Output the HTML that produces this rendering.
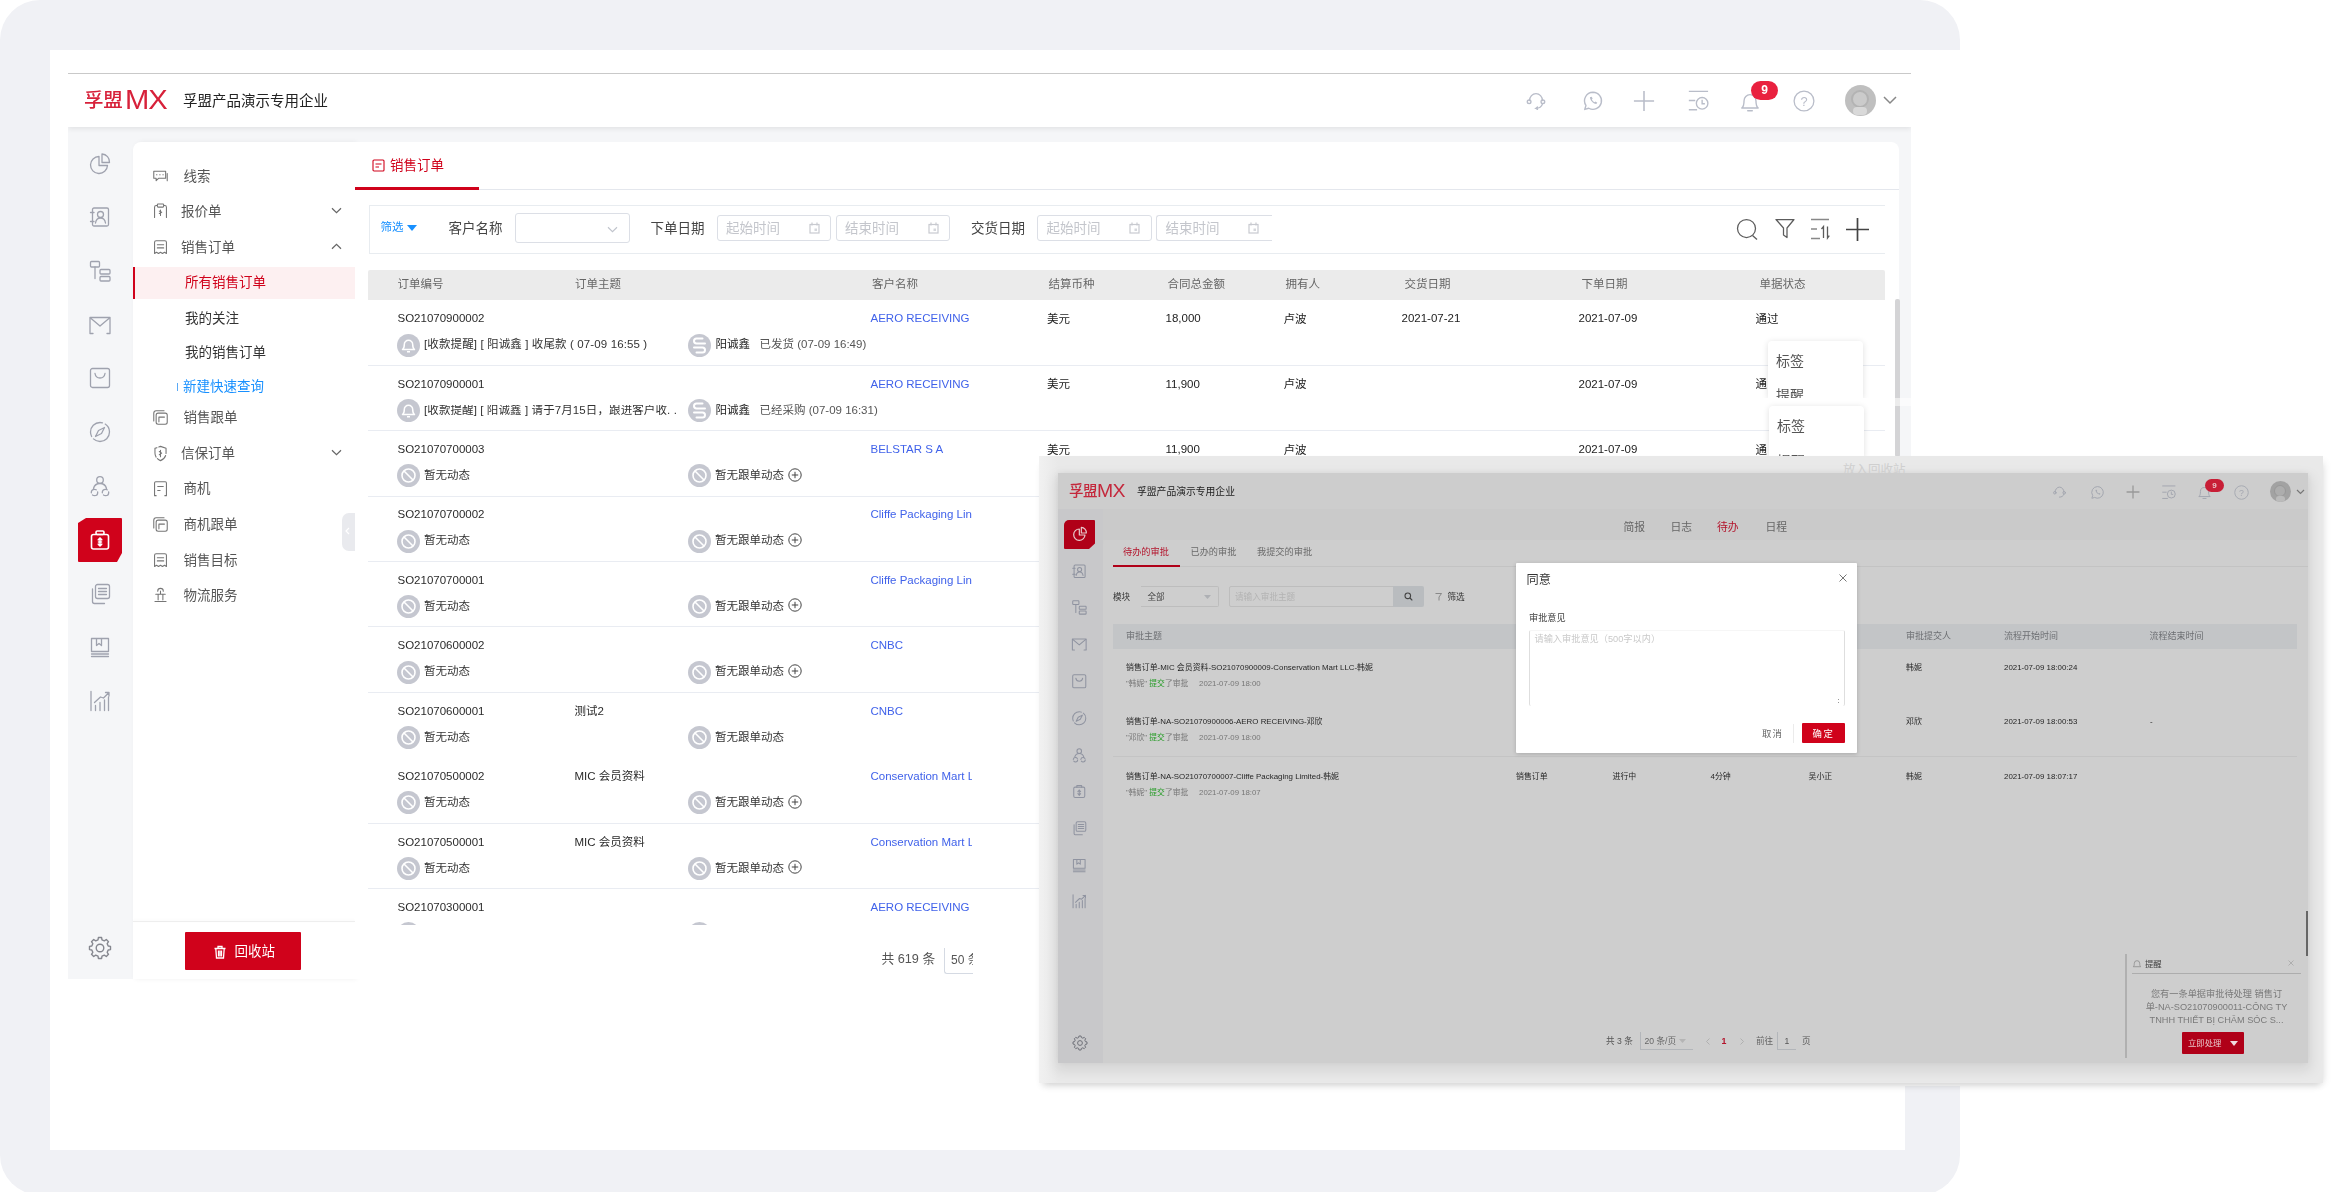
<!DOCTYPE html>
<html lang="zh-CN"><head><meta charset="utf-8"><title>孚盟MX 销售订单</title>
<style>
html,body{margin:0;padding:0}
body{width:2336px;height:1192px;position:relative;overflow:hidden;background:#fff;font-family:"Liberation Sans","Noto Sans CJK SC",sans-serif;}
.b{position:absolute;box-sizing:border-box}
.t{position:absolute;white-space:nowrap;line-height:1}
svg{overflow:visible}
.soft{filter:blur(.6px)}
.soft2{filter:blur(.7px)}
</style></head><body>
<div class="b" style="left:0;top:0;width:1960px;height:1195px;background:#f0f1f5;border-radius:40px"></div>
<div class="b" style="left:50px;top:50px;width:1855px;height:1100px;background:#fff"></div>
<div class="b" style="left:1905px;top:50px;width:431px;height:1036px;background:#fff"></div>
<div class="b soft" id="app1" style="left:0;top:0;width:2336px;height:1192px">
<div class="b" style="left:68.0px;top:127.0px;width:1843.0px;height:852.0px;background:#f5f6f8"></div>
<div class="b" style="left:68.0px;top:73.0px;width:1843.0px;height:54.0px;background:#fff;border-top:1.5px solid #c9c9c9;box-shadow:0 2px 5px rgba(0,0,0,.08);clip-path:inset(0 0 -12px 0)"></div>
<span class="t" style="left:84.0px;top:90.8px;font-size:19.5px;color:#d7213a;font-weight:500;letter-spacing:-.3px">孚盟</span>
<span class="t" style="left:124.5px;top:86.2px;font-size:27.5px;color:#d7213a;font-weight:400;letter-spacing:-1px;transform:scaleX(1.06);transform-origin:0 50%">MX</span>
<span class="t" style="left:183.0px;top:93.8px;font-size:14.5px;color:#222;">孚盟产品演示专用企业</span>
<svg class="b" style="left:1525.0px;top:89.0px;" width="22" height="22" viewBox="0 0 24 24"><g fill="none" stroke="#b9bdc9" stroke-width="1.5" stroke-linecap="round"><path d="M5 12.5a7 7.5 0 0 1 14 0"/><circle cx="4.5" cy="14" r="2"/><circle cx="19.5" cy="14" r="2"/><path d="M19 16.5c-1 3-3.5 4.5-7 4.5l1.6-1.4M12 21l1.6 1.2"/></g></svg>
<svg class="b" style="left:1581.5px;top:90.0px;" width="22" height="22" viewBox="0 0 24 24"><g fill="none" stroke="#b9bdc9" stroke-width="1.5" stroke-linejoin="round"><path d="M12 2.5a9.3 9.3 0 1 1-4.6 17.4L3 21.2l1.3-4.3A9.3 9.3 0 0 1 12 2.5z"/><path d="M8.6 8c.4 3.6 3.2 6.6 7 7.4l1.1-1.6-2-1.2-1 .8c-1.3-.6-2.4-1.7-3-3l.9-1-1.1-2z" fill="#b9bdc9" stroke="none"/></g></svg>
<svg class="b" style="left:1633.0px;top:90.0px;" width="22" height="22" viewBox="0 0 24 24"><path d="M12 1v22M1 12h22" stroke="#b9bdc9" stroke-width="1.7" fill="none"/></svg>
<svg class="b" style="left:1687.0px;top:90.0px;" width="22" height="22" viewBox="0 0 24 24"><g fill="none" stroke="#b9bdc9" stroke-width="1.5"><path d="M2 1.5h21M2 11.5h7M2 21.5h9"/><circle cx="16.5" cy="14.5" r="6.3"/><path d="M16.5 10.5v4.5h3"/></g></svg>
<svg class="b" style="left:1739.0px;top:91.0px;" width="22" height="22" viewBox="0 0 24 24"><g fill="none" stroke="#b9bdc9" stroke-width="1.5" stroke-linejoin="round"><path d="M3 18.5c2-1.5 2.5-4 2.5-8a6.5 6.5 0 0 1 13 0c0 4 .5 6.5 2.5 8z"/><path d="M9.5 21.5h5" stroke-linecap="round"/></g></svg>
<div class="b" style="left:1751px;top:81px;width:27px;height:19px;border-radius:10px;background:#e9213f;color:#fff;font-size:12px;font-weight:bold;text-align:center;line-height:19px">9</div>
<svg class="b" style="left:1792.5px;top:90.0px;" width="22" height="22" viewBox="0 0 24 24"><circle cx="12" cy="12" r="10.8" fill="none" stroke="#b9bdc9" stroke-width="1.4"/><text x="12" y="17" text-anchor="middle" font-size="14" fill="#b9bdc9" font-family="Liberation Sans, sans-serif">?</text></svg>
<div class="b" style="left:1844.5px;top:84.5px;width:31px;height:31px;border-radius:50%;background:#bfbfbf;overflow:hidden"><div class="b" style="left:6.5px;top:5px;width:18px;height:18px;border-radius:50%;background:#cbcbcb;border:2px solid #b3b3b3"></div><div class="b" style="left:8.5px;top:22px;width:14px;height:8px;border-radius:4px;background:#d9d9d9"></div></div>
<svg class="b" style="left:1882.5px;top:95.5px;" width="14" height="9" viewBox="0 0 14 9"><path d="M1 1l6 6 6-6" fill="none" stroke="#888" stroke-width="1.5"/></svg>
<div class="b" style="left:78px;top:518px;width:44px;height:44px;background:#d0021b;border-radius:1px;clip-path:polygon(8px 0,100% 0,100% 35px,39px 100%,0 100%,0 5px)"></div>
<svg class="b" style="left:87.7px;top:151.5px;" width="24" height="24" viewBox="0 0 24 24"><g fill="none" stroke="#9fa2ae" stroke-width="1.3" stroke-linejoin="round" stroke-linecap="round"><path d="M11 4.5a8.5 8.5 0 1 0 8.5 9H11z"/><path d="M14 2v8.5h7.5A8 8 0 0 0 14 2z"/></g></svg>
<svg class="b" style="left:87.7px;top:205.0px;" width="24" height="24" viewBox="0 0 24 24"><g fill="none" stroke="#9fa2ae" stroke-width="1.3" stroke-linejoin="round" stroke-linecap="round"><rect x="4.5" y="3" width="16" height="18" rx="1.5"/><circle cx="12.5" cy="9.5" r="3"/><path d="M7.5 18c.5-3.5 2.5-5 5-5s4.5 1.5 5 5M2.5 7.5h3.5M2.5 16.5h3.5"/></g></svg>
<svg class="b" style="left:87.7px;top:259.0px;" width="24" height="24" viewBox="0 0 24 24"><g fill="none" stroke="#9fa2ae" stroke-width="1.3" stroke-linejoin="round" stroke-linecap="round"><rect x="2.5" y="2.5" width="9" height="5.5" rx="1"/><path d="M7 8v11.5"/><rect x="12" y="10.5" width="10" height="4.5" rx="1"/><rect x="12" y="17.5" width="10" height="4.5" rx="1"/></g></svg>
<svg class="b" style="left:87.7px;top:312.6px;" width="24" height="24" viewBox="0 0 24 24"><g fill="none" stroke="#9fa2ae" stroke-width="1.3" stroke-linejoin="round" stroke-linecap="round"><path d="M2 19.5V4.5h20v15"/><path d="M2.5 5l9.5 8 9.5-8M2 20.5h3M22 20.5h-3"/></g></svg>
<svg class="b" style="left:87.7px;top:366.0px;" width="24" height="24" viewBox="0 0 24 24"><g fill="none" stroke="#9fa2ae" stroke-width="1.3" stroke-linejoin="round" stroke-linecap="round"><rect x="2.5" y="2.5" width="19" height="19" rx="2"/><path d="M7 7.5c.5 3 2.5 4.5 5 4.5s4.5-1.5 5-4.5"/></g></svg>
<svg class="b" style="left:87.7px;top:420.0px;" width="24" height="24" viewBox="0 0 24 24"><g fill="none" stroke="#9fa2ae" stroke-width="1.3" stroke-linejoin="round" stroke-linecap="round"><circle cx="12" cy="12" r="9.5" stroke-dasharray="22 3"/><path d="M16.5 7.5l-3 6-6 3 3-6z"/></g></svg>
<svg class="b" style="left:87.7px;top:474.0px;" width="24" height="24" viewBox="0 0 24 24"><g fill="none" stroke="#9fa2ae" stroke-width="1.3" stroke-linejoin="round" stroke-linecap="round"><circle cx="12" cy="6" r="3.3"/><path d="M5.5 14.5c.8-3.2 3.2-5 6.5-5s5.7 1.8 6.5 5"/><circle cx="6.5" cy="18.5" r="3.2" stroke-dasharray="7 2.5"/><circle cx="17.5" cy="18.5" r="3.2" stroke-dasharray="7 2.5"/></g></svg>
<svg class="b" style="left:87.7px;top:528.0px;" width="24" height="24" viewBox="0 0 24 24"><g fill="none" stroke="#fff" stroke-width="1.6" stroke-linejoin="round" stroke-linecap="round"><rect x="3.5" y="6.5" width="17" height="14.5" rx="2"/><rect x="8" y="3" width="8" height="3.5" rx="1.2"/><path d="M12 10v8M10.3 11.8l1.7-1.8 1.7 1.8M10.3 16.2l1.7 1.8 1.7-1.8M10.5 14h3"/></g></svg>
<svg class="b" style="left:87.7px;top:581.5px;" width="24" height="24" viewBox="0 0 24 24"><g fill="none" stroke="#9fa2ae" stroke-width="1.3" stroke-linejoin="round" stroke-linecap="round"><rect x="7.5" y="2.5" width="14" height="14" rx="2"/><path d="M10.5 6.5h8M10.5 9.5h8M10.5 12.5h8M4.5 7v12.5a2 2 0 0 0 2 2h10"/></g></svg>
<svg class="b" style="left:87.7px;top:635.0px;" width="24" height="24" viewBox="0 0 24 24"><g fill="none" stroke="#9fa2ae" stroke-width="1.3" stroke-linejoin="round" stroke-linecap="round"><path d="M3.5 3.5h17v13h-17zM8.5 3.5v7l2.5-2 2.5 2v-7M3.5 19h17M3.5 21.5h17"/></g></svg>
<svg class="b" style="left:87.7px;top:689.0px;" width="24" height="24" viewBox="0 0 24 24"><g fill="none" stroke="#9fa2ae" stroke-width="1.3" stroke-linejoin="round" stroke-linecap="round"><path d="M3 2.5v19M7.5 21.5v-5M12 21.5v-8M16.5 21.5v-10.5M20.5 21.5V8M6.5 13.5l6-5.5 3 1 5.5-5.5M17.5 3.5h3.5v3.5"/></g></svg>
<svg class="b" style="left:87.7px;top:936.0px;" width="24" height="24" viewBox="0 0 24 24"><g fill="none" stroke="#85878f" stroke-width="1.4" stroke-linejoin="round"><path d="M22.5 10.4 L22.5 13.6 L20.2 14.0 L19.2 16.3 L20.5 18.3 L18.3 20.5 L16.3 19.2 L14.0 20.2 L13.6 22.5 L10.4 22.5 L10.0 20.2 L7.7 19.2 L5.7 20.5 L3.5 18.3 L4.8 16.3 L3.8 14.0 L1.5 13.6 L1.5 10.4 L3.8 10.0 L4.8 7.7 L3.5 5.7 L5.7 3.5 L7.7 4.8 L10.0 3.8 L10.4 1.5 L13.6 1.5 L14.0 3.8 L16.3 4.8 L18.3 3.5 L20.5 5.7 L19.2 7.7 L20.2 10.0z"/><circle cx="12" cy="12" r="3.8"/></g></svg>
<div class="b" style="left:133.0px;top:142.0px;width:222.0px;height:837.0px;background:#fff;border-radius:8px 0 0 0;box-shadow:2px 0 5px rgba(0,0,0,.06)"></div>
<div class="b" style="left:133.0px;top:267.0px;width:222.0px;height:31.5px;background:#fdf0f1;border-left:2.5px solid #d0021b"></div>
<svg class="b" style="left:151.0px;top:168.0px;" width="19" height="19" viewBox="0 0 24 24"><g fill="none" stroke="#757575" stroke-width="1.35" stroke-linejoin="round" stroke-linecap="round"><path d="M3.5 4h15v9h-9l-3 3v-3h-3zM7 8.5h.5M11 8.5h.5M15 8.5h.5M20.5 7v9"/></g></svg>
<span class="t" style="left:183.5px;top:169.8px;font-size:13.5px;color:#555;">线索</span>
<svg class="b" style="left:151.0px;top:201.5px;" width="19" height="19" viewBox="0 0 24 24"><g fill="none" stroke="#757575" stroke-width="1.35" stroke-linejoin="round" stroke-linecap="round"><path d="M4.5 19.5v-13a2 2 0 0 1 2-2h1M16.5 4.5h1a2 2 0 0 1 2 2v13"/><rect x="8" y="2.5" width="8" height="4" rx="1"/><path d="M12 10v7M10.5 11.5l3 1.5-3 1.5"/></g></svg>
<span class="t" style="left:181.0px;top:204.8px;font-size:13.5px;color:#555;">报价单</span>
<svg class="b" style="left:331.0px;top:206.5px;" width="11" height="7" viewBox="0 0 11 6.5"><path d="M1 1l4.5 4.5 4.5-4.5" fill="none" stroke="#666" stroke-width="1.2"/></svg>
<svg class="b" style="left:151.0px;top:237.5px;" width="19" height="19" viewBox="0 0 24 24"><g fill="none" stroke="#757575" stroke-width="1.35" stroke-linejoin="round" stroke-linecap="round"><path d="M4.5 19.5v-14a2 2 0 0 1 2-2h11a2 2 0 0 1 2 2v14l-2.5-1.5-2.5 1.5-2.5-1.5-2.5 1.5-2.5-1.5z"/><path d="M8 8.5h8M8 12.5h8"/></g></svg>
<span class="t" style="left:181.0px;top:240.8px;font-size:13.5px;color:#555;">销售订单</span>
<svg class="b" style="left:331.0px;top:242.5px;" width="11" height="7" viewBox="0 0 11 6.5"><path d="M1 5.5l4.5-4.5 4.5 4.5" fill="none" stroke="#666" stroke-width="1.2"/></svg>
<span class="t" style="left:185.0px;top:276.2px;font-size:13.5px;color:#d0021b;">所有销售订单</span>
<span class="t" style="left:185.0px;top:311.8px;font-size:13.5px;color:#333;">我的关注</span>
<span class="t" style="left:185.0px;top:345.8px;font-size:13.5px;color:#333;">我的销售订单</span>
<div class="b" style="left:177.0px;top:383.0px;width:1.0px;height:8.0px;background:#5aa9f5"></div>
<span class="t" style="left:183.0px;top:380.2px;font-size:13.5px;color:#1890ff;">新建快速查询</span>
<svg class="b" style="left:151.0px;top:407.5px;" width="19" height="19" viewBox="0 0 24 24"><g fill="none" stroke="#757575" stroke-width="1.35" stroke-linejoin="round" stroke-linecap="round"><rect x="6.5" y="6.5" width="14" height="14" rx="2.5"/><path d="M3.5 16.5v-10a3 3 0 0 1 3-3h10M10 11.5h7M10 11.5v6"/></g></svg>
<span class="t" style="left:183.5px;top:410.8px;font-size:13.5px;color:#555;">销售跟单</span>
<svg class="b" style="left:151.0px;top:443.5px;" width="19" height="19" viewBox="0 0 24 24"><g fill="none" stroke="#757575" stroke-width="1.35" stroke-linejoin="round" stroke-linecap="round"><path d="M12 3l7 2.5v6c0 4.5-3 8-7 9.5-4-1.5-7-5-7-9.5v-6z" stroke-dasharray="14 2.5"/><path d="M12 8v8M10.5 9.5l3 2-3 2"/></g></svg>
<span class="t" style="left:181.0px;top:446.8px;font-size:13.5px;color:#555;">信保订单</span>
<svg class="b" style="left:331.0px;top:448.5px;" width="11" height="7" viewBox="0 0 11 6.5"><path d="M1 1l4.5 4.5 4.5-4.5" fill="none" stroke="#666" stroke-width="1.2"/></svg>
<svg class="b" style="left:151.0px;top:478.5px;" width="19" height="19" viewBox="0 0 24 24"><g fill="none" stroke="#757575" stroke-width="1.35" stroke-linejoin="round" stroke-linecap="round"><path d="M4.5 21v-16a1.5 1.5 0 0 1 1.5-1.5h12a1.5 1.5 0 0 1 1.5 1.5v16M4.5 21h2M17.5 21h2M8.5 9.5h7M8.5 14.5h3"/></g></svg>
<span class="t" style="left:183.5px;top:481.8px;font-size:13.5px;color:#555;">商机</span>
<svg class="b" style="left:151.0px;top:514.5px;" width="19" height="19" viewBox="0 0 24 24"><g fill="none" stroke="#757575" stroke-width="1.35" stroke-linejoin="round" stroke-linecap="round"><rect x="6.5" y="6.5" width="14" height="14" rx="2.5"/><path d="M3.5 16.5v-10a3 3 0 0 1 3-3h10M10 11.5h7M10 11.5v6"/></g></svg>
<span class="t" style="left:183.5px;top:517.8px;font-size:13.5px;color:#555;">商机跟单</span>
<svg class="b" style="left:151.0px;top:550.5px;" width="19" height="19" viewBox="0 0 24 24"><g fill="none" stroke="#757575" stroke-width="1.35" stroke-linejoin="round" stroke-linecap="round"><path d="M4.5 19.5v-14a2 2 0 0 1 2-2h11a2 2 0 0 1 2 2v14l-2.5-1.5-2.5 1.5-2.5-1.5-2.5 1.5-2.5-1.5z"/><path d="M8 8.5h8M8 12.5h8"/></g></svg>
<span class="t" style="left:183.5px;top:553.8px;font-size:13.5px;color:#555;">销售目标</span>
<svg class="b" style="left:151.0px;top:585.5px;" width="19" height="19" viewBox="0 0 24 24"><g fill="none" stroke="#757575" stroke-width="1.35" stroke-linejoin="round" stroke-linecap="round"><path d="M8.5 6.5a3.5 3.5 0 0 1 7 0M6 10.5h12M9 10.5v7M15 10.5v7M5 19.5h14M12 6.5v4"/></g></svg>
<span class="t" style="left:183.5px;top:588.8px;font-size:13.5px;color:#555;">物流服务</span>
<div class="b" style="left:133.0px;top:921.0px;width:222.0px;height:1.0px;background:#eee;box-shadow:0 -1px 3px rgba(0,0,0,.05)"></div>
<div class="b" style="left:185px;top:932px;width:116px;height:38px;background:#d0021b;border-radius:1px"></div>
<svg class="b" style="left:212.5px;top:944.5px;" width="14" height="14" viewBox="0 0 14 14"><g fill="none" stroke="#fff" stroke-width="1.3"><path d="M1.5 3.5h11M5 3.5v-2h4v2M2.8 3.5l.7 9.5h7l.7-9.5M5.5 5.5v6M7 5.5v6M8.5 5.5v6"/></g></svg>
<span class="t" style="left:234.5px;top:945.2px;font-size:13.5px;color:#fff;">回收站</span>
<div class="b" style="left:342px;top:513px;width:13px;height:37.5px;background:#e9eaee;border-radius:7px 0 0 7px"></div>
<svg class="b" style="left:344.5px;top:527.0px;" width="5" height="8" viewBox="0 0 5 8"><path d="M4 1L1 4l3 3" fill="none" stroke="#fff" stroke-width="1.2"/></svg>
<div class="b" style="left:355.0px;top:142.0px;width:1544.0px;height:837.0px;background:#fff;border-radius:0 8px 0 0"></div>
<div class="b" style="left:355.0px;top:188.5px;width:1544.0px;height:1.0px;background:#e4e7ed"></div>
<div class="b" style="left:355.0px;top:187.0px;width:124.0px;height:2.5px;background:#d0021b"></div>
<svg class="b" style="left:372.0px;top:158.5px;" width="13" height="13" viewBox="0 0 13 13"><g fill="none" stroke="#d0021b" stroke-width="1.1"><rect x="1" y="1" width="11" height="11" rx="1"/><path d="M3.5 5h6M3.5 8h3.5"/></g></svg>
<span class="t" style="left:390.0px;top:158.8px;font-size:13.5px;color:#d0021b;">销售订单</span>
<div class="b" style="left:369.0px;top:205.0px;width:1516.0px;height:48.5px;border:1px solid #e8ecf0;border-right:none"></div>
<span class="t" style="left:380.5px;top:221.8px;font-size:11.5px;color:#1890ff;">筛选</span>
<svg class="b" style="left:407.0px;top:224.5px;" width="10" height="6" viewBox="0 0 10 6"><path d="M0 0h10L5 6z" fill="#1890ff"/></svg>
<span class="t" style="left:448.5px;top:221.8px;font-size:13.5px;color:#444;">客户名称</span>
<div class="b" style="left:515.0px;top:212.5px;width:115.0px;height:30.5px;border:1px solid #dcdfe6;border-radius:3px"></div>
<svg class="b" style="left:607.0px;top:225.5px;" width="11" height="7" viewBox="0 0 11 6.5"><path d="M1 1l4.5 4.5 4.5-4.5" fill="none" stroke="#c0c4cc" stroke-width="1.1"/></svg>
<span class="t" style="left:650.5px;top:221.8px;font-size:13.5px;color:#444;">下单日期</span>
<div class="b" style="left:716.5px;top:214.5px;width:114.5px;height:26.5px;border:1px solid #dcdfe6;border-radius:3px"></div>
<span class="t" style="left:726.0px;top:221.8px;font-size:13.5px;color:#c4c6cc;">起始时间</span>
<svg class="b" style="left:808.5px;top:221.5px;" width="11" height="12" viewBox="0 0 11 12"><g fill="none" stroke="#c8cad0" stroke-width="1.2"><rect x="1" y="2.5" width="9" height="8.5"/><path d="M3 .5v3M8 .5v3"/><rect x="5.5" y="6.5" width="2.5" height="2.5" fill="#d5d7dc" stroke="none"/></g></svg>
<div class="b" style="left:835.5px;top:214.5px;width:114.5px;height:26.5px;border:1px solid #dcdfe6;border-radius:3px"></div>
<span class="t" style="left:845.0px;top:221.8px;font-size:13.5px;color:#c4c6cc;">结束时间</span>
<svg class="b" style="left:927.5px;top:221.5px;" width="11" height="12" viewBox="0 0 11 12"><g fill="none" stroke="#c8cad0" stroke-width="1.2"><rect x="1" y="2.5" width="9" height="8.5"/><path d="M3 .5v3M8 .5v3"/><rect x="5.5" y="6.5" width="2.5" height="2.5" fill="#d5d7dc" stroke="none"/></g></svg>
<span class="t" style="left:971.0px;top:221.8px;font-size:13.5px;color:#444;">交货日期</span>
<div class="b" style="left:1037.0px;top:214.5px;width:114.5px;height:26.5px;border:1px solid #dcdfe6;border-radius:3px"></div>
<span class="t" style="left:1046.5px;top:221.8px;font-size:13.5px;color:#c4c6cc;">起始时间</span>
<svg class="b" style="left:1129.0px;top:221.5px;" width="11" height="12" viewBox="0 0 11 12"><g fill="none" stroke="#c8cad0" stroke-width="1.2"><rect x="1" y="2.5" width="9" height="8.5"/><path d="M3 .5v3M8 .5v3"/><rect x="5.5" y="6.5" width="2.5" height="2.5" fill="#d5d7dc" stroke="none"/></g></svg>
<div class="b" style="left:1156.0px;top:214.5px;width:115.5px;height:26.5px;border:1px solid #dcdfe6;border-radius:3px;border-right:none;border-radius:3px 0 0 3px"></div>
<span class="t" style="left:1165.5px;top:221.8px;font-size:13.5px;color:#c4c6cc;">结束时间</span>
<svg class="b" style="left:1248.0px;top:221.5px;" width="11" height="12" viewBox="0 0 11 12"><g fill="none" stroke="#c8cad0" stroke-width="1.2"><rect x="1" y="2.5" width="9" height="8.5"/><path d="M3 .5v3M8 .5v3"/><rect x="5.5" y="6.5" width="2.5" height="2.5" fill="#d5d7dc" stroke="none"/></g></svg>
<svg class="b" style="left:1735.5px;top:217.5px;" width="22" height="22" viewBox="0 0 22 22"><g fill="none" stroke="#5c5c5c" stroke-width="1.25"><circle cx="10.5" cy="10.5" r="9"/><path d="M16.5 17.5l4.5 4"/></g></svg>
<svg class="b" style="left:1774.5px;top:218.0px;" width="20" height="22" viewBox="0 0 20 22"><path d="M1 1.5h18l-7 8.5v9.5l-3.5-2.5v-7z" fill="none" stroke="#5c5c5c" stroke-width="1.25" stroke-linejoin="round"/></svg>
<svg class="b" style="left:1810.0px;top:217.5px;" width="20" height="22" viewBox="0 0 20 22"><g fill="none" stroke="#5c5c5c" stroke-width="1.3"><path d="M1 1.5h18M1 11h6M1 20.5h9" stroke="#888"/><path d="M13.5 20v-11.5l-2 2.5M17.5 8.5v11.5l1.8-2.3"/></g></svg>
<svg class="b" style="left:1845.5px;top:218.0px;" width="23" height="23" viewBox="0 0 23 23"><path d="M11.5 0v23M0 11.5h23" stroke="#444" stroke-width="1.7" fill="none"/></svg>
<div class="b" style="left:368.0px;top:270.0px;width:1517.0px;height:29.5px;background:#ebebeb;border-radius:2px 2px 0 0"></div>
<span class="t" style="left:397.5px;top:278.8px;font-size:11.5px;color:#666;">订单编号</span>
<span class="t" style="left:575.0px;top:278.8px;font-size:11.5px;color:#666;">订单主题</span>
<span class="t" style="left:872.0px;top:278.8px;font-size:11.5px;color:#666;">客户名称</span>
<span class="t" style="left:1048.5px;top:278.8px;font-size:11.5px;color:#666;">结算币种</span>
<span class="t" style="left:1167.5px;top:278.8px;font-size:11.5px;color:#666;">合同总金额</span>
<span class="t" style="left:1285.5px;top:278.8px;font-size:11.5px;color:#666;">拥有人</span>
<span class="t" style="left:1404.5px;top:278.8px;font-size:11.5px;color:#666;">交货日期</span>
<span class="t" style="left:1581.5px;top:278.8px;font-size:11.5px;color:#666;">下单日期</span>
<span class="t" style="left:1759.5px;top:278.8px;font-size:11.5px;color:#666;">单据状态</span>
<div class="b" style="left:355px;top:299px;width:1544px;height:625.5px;overflow:hidden">
<span class="t" style="left:42.5px;top:14.2px;font-size:11.5px;color:#2b2b2b;">SO21070900002</span>
<span class="t" style="left:515.5px;top:14.2px;font-size:11.5px;color:#4062ea;">AERO RECEIVING</span>
<span class="t" style="left:692.0px;top:14.8px;font-size:11.5px;color:#222;">美元</span>
<span class="t" style="left:810.5px;top:14.2px;font-size:11.5px;color:#222;">18,000</span>
<span class="t" style="left:928.5px;top:14.8px;font-size:11.5px;color:#222;">卢波</span>
<span class="t" style="left:1046.5px;top:14.2px;font-size:11.5px;color:#222;">2021-07-21</span>
<span class="t" style="left:1223.5px;top:14.2px;font-size:11.5px;color:#222;">2021-07-09</span>
<span class="t" style="left:1400.5px;top:14.8px;font-size:11.5px;color:#222;">通过</span>
<svg class="b" style="left:42.0px;top:34.5px;" width="23" height="23" viewBox="0 0 23 23"><circle cx="11.5" cy="11.5" r="11.5" fill="#c5c7d0"/><path d="M5.5 15.5c1.5-1 1.8-2.5 1.8-5a4.2 4.2 0 0 1 8.4 0c0 2.5.3 4 1.8 5zM10 17.8h3" fill="none" stroke="#fff" stroke-width="1.5" stroke-linejoin="round"/></svg>
<span class="t" style="left:69.0px;top:40.2px;font-size:11.5px;color:#333;letter-spacing:.12px">[收款提醒] [ 阳诚鑫 ] 收尾款 ( 07-09 16:55 )</span>
<svg class="b" style="left:333.0px;top:34.5px;" width="23" height="23" viewBox="0 0 23 23"><circle cx="11.5" cy="11.5" r="11.5" fill="#c5c7d0"/><path d="M17 9.5H8.5a2.5 2.5 0 0 1 0-5h6M6 13.5h8.5a2.5 2.5 0 0 1 0 5h-6" fill="none" stroke="#fff" stroke-width="2" stroke-linecap="round"/></svg>
<span class="t" style="left:360.5px;top:40.2px;font-size:11.5px;color:#222;">阳诚鑫</span>
<span class="t" style="left:404.5px;top:40.2px;font-size:11.5px;color:#555;">已发货 (07-09 16:49)</span>
<div class="b" style="left:13.0px;top:66.0px;width:1517.0px;height:1.0px;background:#e9ecf2"></div>
<span class="t" style="left:42.5px;top:79.7px;font-size:11.5px;color:#2b2b2b;">SO21070900001</span>
<span class="t" style="left:515.5px;top:79.7px;font-size:11.5px;color:#4062ea;">AERO RECEIVING</span>
<span class="t" style="left:692.0px;top:80.2px;font-size:11.5px;color:#222;">美元</span>
<span class="t" style="left:810.5px;top:79.7px;font-size:11.5px;color:#222;">11,900</span>
<span class="t" style="left:928.5px;top:80.2px;font-size:11.5px;color:#222;">卢波</span>
<span class="t" style="left:1223.5px;top:79.7px;font-size:11.5px;color:#222;">2021-07-09</span>
<span class="t" style="left:1400.5px;top:80.2px;font-size:11.5px;color:#222;">通</span>
<svg class="b" style="left:42.0px;top:99.9px;" width="23" height="23" viewBox="0 0 23 23"><circle cx="11.5" cy="11.5" r="11.5" fill="#c5c7d0"/><path d="M5.5 15.5c1.5-1 1.8-2.5 1.8-5a4.2 4.2 0 0 1 8.4 0c0 2.5.3 4 1.8 5zM10 17.8h3" fill="none" stroke="#fff" stroke-width="1.5" stroke-linejoin="round"/></svg>
<span class="t" style="left:69.0px;top:105.7px;font-size:11.5px;color:#333;width:254px;overflow:hidden;letter-spacing:.1px">[收款提醒] [ 阳诚鑫 ] 请于7月15日，跟进客户收. . .</span>
<svg class="b" style="left:333.0px;top:99.9px;" width="23" height="23" viewBox="0 0 23 23"><circle cx="11.5" cy="11.5" r="11.5" fill="#c5c7d0"/><path d="M17 9.5H8.5a2.5 2.5 0 0 1 0-5h6M6 13.5h8.5a2.5 2.5 0 0 1 0 5h-6" fill="none" stroke="#fff" stroke-width="2" stroke-linecap="round"/></svg>
<span class="t" style="left:360.5px;top:105.7px;font-size:11.5px;color:#222;">阳诚鑫</span>
<span class="t" style="left:404.5px;top:105.7px;font-size:11.5px;color:#555;">已经采购 (07-09 16:31)</span>
<div class="b" style="left:13.0px;top:131.0px;width:1517.0px;height:1.0px;background:#e9ecf2"></div>
<span class="t" style="left:42.5px;top:145.1px;font-size:11.5px;color:#2b2b2b;">SO21070700003</span>
<span class="t" style="left:515.5px;top:145.1px;font-size:11.5px;color:#4062ea;">BELSTAR S A</span>
<span class="t" style="left:692.0px;top:145.6px;font-size:11.5px;color:#222;">美元</span>
<span class="t" style="left:810.5px;top:145.1px;font-size:11.5px;color:#222;">11,900</span>
<span class="t" style="left:928.5px;top:145.6px;font-size:11.5px;color:#222;">卢波</span>
<span class="t" style="left:1223.5px;top:145.1px;font-size:11.5px;color:#222;">2021-07-09</span>
<span class="t" style="left:1400.5px;top:145.6px;font-size:11.5px;color:#222;">通</span>
<svg class="b" style="left:42.0px;top:165.3px;" width="23" height="23" viewBox="0 0 23 23"><circle cx="11.5" cy="11.5" r="11.5" fill="#c5c7d0"/><circle cx="11.5" cy="11.5" r="6.5" fill="none" stroke="#fff" stroke-width="1.6"/><path d="M7 7l9 9" stroke="#fff" stroke-width="1.6"/></svg>
<svg class="b" style="left:333.0px;top:165.3px;" width="23" height="23" viewBox="0 0 23 23"><circle cx="11.5" cy="11.5" r="11.5" fill="#c5c7d0"/><circle cx="11.5" cy="11.5" r="6.5" fill="none" stroke="#fff" stroke-width="1.6"/><path d="M7 7l9 9" stroke="#fff" stroke-width="1.6"/></svg>
<span class="t" style="left:69.0px;top:171.1px;font-size:11.5px;color:#333;">暂无动态</span>
<span class="t" style="left:360.0px;top:171.1px;font-size:11.5px;color:#333;">暂无跟单动态</span>
<svg class="b" style="left:433.0px;top:168.5px;" width="14" height="14" viewBox="0 0 14 14"><circle cx="7" cy="7" r="6.2" fill="none" stroke="#444" stroke-width="1"/><path d="M7 3.8v6.4M3.8 7h6.4" stroke="#444" stroke-width="1"/></svg>
<div class="b" style="left:13.0px;top:197.0px;width:1517.0px;height:1.0px;background:#e9ecf2"></div>
<span class="t" style="left:42.5px;top:210.4px;font-size:11.5px;color:#2b2b2b;">SO21070700002</span>
<span class="t" style="left:515.5px;top:210.4px;font-size:11.5px;color:#4062ea;">Cliffe Packaging Lin</span>
<svg class="b" style="left:42.0px;top:230.7px;" width="23" height="23" viewBox="0 0 23 23"><circle cx="11.5" cy="11.5" r="11.5" fill="#c5c7d0"/><circle cx="11.5" cy="11.5" r="6.5" fill="none" stroke="#fff" stroke-width="1.6"/><path d="M7 7l9 9" stroke="#fff" stroke-width="1.6"/></svg>
<svg class="b" style="left:333.0px;top:230.7px;" width="23" height="23" viewBox="0 0 23 23"><circle cx="11.5" cy="11.5" r="11.5" fill="#c5c7d0"/><circle cx="11.5" cy="11.5" r="6.5" fill="none" stroke="#fff" stroke-width="1.6"/><path d="M7 7l9 9" stroke="#fff" stroke-width="1.6"/></svg>
<span class="t" style="left:69.0px;top:236.4px;font-size:11.5px;color:#333;">暂无动态</span>
<span class="t" style="left:360.0px;top:236.4px;font-size:11.5px;color:#333;">暂无跟单动态</span>
<svg class="b" style="left:433.0px;top:233.9px;" width="14" height="14" viewBox="0 0 14 14"><circle cx="7" cy="7" r="6.2" fill="none" stroke="#444" stroke-width="1"/><path d="M7 3.8v6.4M3.8 7h6.4" stroke="#444" stroke-width="1"/></svg>
<div class="b" style="left:13.0px;top:262.0px;width:1517.0px;height:1.0px;background:#e9ecf2"></div>
<span class="t" style="left:42.5px;top:275.8px;font-size:11.5px;color:#2b2b2b;">SO21070700001</span>
<span class="t" style="left:515.5px;top:275.8px;font-size:11.5px;color:#4062ea;">Cliffe Packaging Lin</span>
<svg class="b" style="left:42.0px;top:296.1px;" width="23" height="23" viewBox="0 0 23 23"><circle cx="11.5" cy="11.5" r="11.5" fill="#c5c7d0"/><circle cx="11.5" cy="11.5" r="6.5" fill="none" stroke="#fff" stroke-width="1.6"/><path d="M7 7l9 9" stroke="#fff" stroke-width="1.6"/></svg>
<svg class="b" style="left:333.0px;top:296.1px;" width="23" height="23" viewBox="0 0 23 23"><circle cx="11.5" cy="11.5" r="11.5" fill="#c5c7d0"/><circle cx="11.5" cy="11.5" r="6.5" fill="none" stroke="#fff" stroke-width="1.6"/><path d="M7 7l9 9" stroke="#fff" stroke-width="1.6"/></svg>
<span class="t" style="left:69.0px;top:301.8px;font-size:11.5px;color:#333;">暂无动态</span>
<span class="t" style="left:360.0px;top:301.8px;font-size:11.5px;color:#333;">暂无跟单动态</span>
<svg class="b" style="left:433.0px;top:299.3px;" width="14" height="14" viewBox="0 0 14 14"><circle cx="7" cy="7" r="6.2" fill="none" stroke="#444" stroke-width="1"/><path d="M7 3.8v6.4M3.8 7h6.4" stroke="#444" stroke-width="1"/></svg>
<div class="b" style="left:13.0px;top:327.0px;width:1517.0px;height:1.0px;background:#e9ecf2"></div>
<span class="t" style="left:42.5px;top:341.2px;font-size:11.5px;color:#2b2b2b;">SO21070600002</span>
<span class="t" style="left:515.5px;top:341.2px;font-size:11.5px;color:#4062ea;">CNBC</span>
<svg class="b" style="left:42.0px;top:361.5px;" width="23" height="23" viewBox="0 0 23 23"><circle cx="11.5" cy="11.5" r="11.5" fill="#c5c7d0"/><circle cx="11.5" cy="11.5" r="6.5" fill="none" stroke="#fff" stroke-width="1.6"/><path d="M7 7l9 9" stroke="#fff" stroke-width="1.6"/></svg>
<svg class="b" style="left:333.0px;top:361.5px;" width="23" height="23" viewBox="0 0 23 23"><circle cx="11.5" cy="11.5" r="11.5" fill="#c5c7d0"/><circle cx="11.5" cy="11.5" r="6.5" fill="none" stroke="#fff" stroke-width="1.6"/><path d="M7 7l9 9" stroke="#fff" stroke-width="1.6"/></svg>
<span class="t" style="left:69.0px;top:367.2px;font-size:11.5px;color:#333;">暂无动态</span>
<span class="t" style="left:360.0px;top:367.2px;font-size:11.5px;color:#333;">暂无跟单动态</span>
<svg class="b" style="left:433.0px;top:364.7px;" width="14" height="14" viewBox="0 0 14 14"><circle cx="7" cy="7" r="6.2" fill="none" stroke="#444" stroke-width="1"/><path d="M7 3.8v6.4M3.8 7h6.4" stroke="#444" stroke-width="1"/></svg>
<div class="b" style="left:13.0px;top:393.0px;width:1517.0px;height:1.0px;background:#e9ecf2"></div>
<span class="t" style="left:42.5px;top:406.6px;font-size:11.5px;color:#2b2b2b;">SO21070600001</span>
<span class="t" style="left:219.5px;top:406.6px;font-size:11.5px;color:#2b2b2b;">测试2</span>
<span class="t" style="left:515.5px;top:406.6px;font-size:11.5px;color:#4062ea;">CNBC</span>
<svg class="b" style="left:42.0px;top:426.9px;" width="23" height="23" viewBox="0 0 23 23"><circle cx="11.5" cy="11.5" r="11.5" fill="#c5c7d0"/><circle cx="11.5" cy="11.5" r="6.5" fill="none" stroke="#fff" stroke-width="1.6"/><path d="M7 7l9 9" stroke="#fff" stroke-width="1.6"/></svg>
<svg class="b" style="left:333.0px;top:426.9px;" width="23" height="23" viewBox="0 0 23 23"><circle cx="11.5" cy="11.5" r="11.5" fill="#c5c7d0"/><circle cx="11.5" cy="11.5" r="6.5" fill="none" stroke="#fff" stroke-width="1.6"/><path d="M7 7l9 9" stroke="#fff" stroke-width="1.6"/></svg>
<span class="t" style="left:69.0px;top:432.6px;font-size:11.5px;color:#333;">暂无动态</span>
<span class="t" style="left:360.0px;top:432.6px;font-size:11.5px;color:#333;">暂无跟单动态</span>
<span class="t" style="left:42.5px;top:472.0px;font-size:11.5px;color:#2b2b2b;">SO21070500002</span>
<span class="t" style="left:219.5px;top:472.0px;font-size:11.5px;color:#2b2b2b;">MIC 会员资料</span>
<span class="t" style="left:515.5px;top:472.0px;font-size:11.5px;color:#4062ea;">Conservation Mart L</span>
<svg class="b" style="left:42.0px;top:492.3px;" width="23" height="23" viewBox="0 0 23 23"><circle cx="11.5" cy="11.5" r="11.5" fill="#c5c7d0"/><circle cx="11.5" cy="11.5" r="6.5" fill="none" stroke="#fff" stroke-width="1.6"/><path d="M7 7l9 9" stroke="#fff" stroke-width="1.6"/></svg>
<svg class="b" style="left:333.0px;top:492.3px;" width="23" height="23" viewBox="0 0 23 23"><circle cx="11.5" cy="11.5" r="11.5" fill="#c5c7d0"/><circle cx="11.5" cy="11.5" r="6.5" fill="none" stroke="#fff" stroke-width="1.6"/><path d="M7 7l9 9" stroke="#fff" stroke-width="1.6"/></svg>
<span class="t" style="left:69.0px;top:498.0px;font-size:11.5px;color:#333;">暂无动态</span>
<span class="t" style="left:360.0px;top:498.0px;font-size:11.5px;color:#333;">暂无跟单动态</span>
<svg class="b" style="left:433.0px;top:495.5px;" width="14" height="14" viewBox="0 0 14 14"><circle cx="7" cy="7" r="6.2" fill="none" stroke="#444" stroke-width="1"/><path d="M7 3.8v6.4M3.8 7h6.4" stroke="#444" stroke-width="1"/></svg>
<div class="b" style="left:13.0px;top:524.0px;width:1517.0px;height:1.0px;background:#e9ecf2"></div>
<span class="t" style="left:42.5px;top:537.5px;font-size:11.5px;color:#2b2b2b;">SO21070500001</span>
<span class="t" style="left:219.5px;top:537.5px;font-size:11.5px;color:#2b2b2b;">MIC 会员资料</span>
<span class="t" style="left:515.5px;top:537.5px;font-size:11.5px;color:#4062ea;">Conservation Mart L</span>
<svg class="b" style="left:42.0px;top:557.7px;" width="23" height="23" viewBox="0 0 23 23"><circle cx="11.5" cy="11.5" r="11.5" fill="#c5c7d0"/><circle cx="11.5" cy="11.5" r="6.5" fill="none" stroke="#fff" stroke-width="1.6"/><path d="M7 7l9 9" stroke="#fff" stroke-width="1.6"/></svg>
<svg class="b" style="left:333.0px;top:557.7px;" width="23" height="23" viewBox="0 0 23 23"><circle cx="11.5" cy="11.5" r="11.5" fill="#c5c7d0"/><circle cx="11.5" cy="11.5" r="6.5" fill="none" stroke="#fff" stroke-width="1.6"/><path d="M7 7l9 9" stroke="#fff" stroke-width="1.6"/></svg>
<span class="t" style="left:69.0px;top:563.5px;font-size:11.5px;color:#333;">暂无动态</span>
<span class="t" style="left:360.0px;top:563.5px;font-size:11.5px;color:#333;">暂无跟单动态</span>
<svg class="b" style="left:433.0px;top:560.9px;" width="14" height="14" viewBox="0 0 14 14"><circle cx="7" cy="7" r="6.2" fill="none" stroke="#444" stroke-width="1"/><path d="M7 3.8v6.4M3.8 7h6.4" stroke="#444" stroke-width="1"/></svg>
<div class="b" style="left:13.0px;top:589.0px;width:1517.0px;height:1.0px;background:#e9ecf2"></div>
<span class="t" style="left:42.5px;top:602.8px;font-size:11.5px;color:#2b2b2b;">SO21070300001</span>
<span class="t" style="left:515.5px;top:602.8px;font-size:11.5px;color:#4062ea;">AERO RECEIVING</span>
<svg class="b" style="left:42.0px;top:623.1px;" width="23" height="23" viewBox="0 0 23 23"><circle cx="11.5" cy="11.5" r="11.5" fill="#c5c7d0"/><circle cx="11.5" cy="11.5" r="6.5" fill="none" stroke="#fff" stroke-width="1.6"/><path d="M7 7l9 9" stroke="#fff" stroke-width="1.6"/></svg>
<svg class="b" style="left:333.0px;top:623.1px;" width="23" height="23" viewBox="0 0 23 23"><circle cx="11.5" cy="11.5" r="11.5" fill="#c5c7d0"/><circle cx="11.5" cy="11.5" r="6.5" fill="none" stroke="#fff" stroke-width="1.6"/><path d="M7 7l9 9" stroke="#fff" stroke-width="1.6"/></svg>
<div class="b" style="left:13.0px;top:654.0px;width:1517.0px;height:1.0px;background:#e9ecf2"></div>
</div>
<div class="b" style="left:972.0px;top:497.0px;width:70.0px;height:390.0px;background:#fff"></div>
<div class="b" style="left:972.0px;top:561.0px;width:70.0px;height:1.0px;background:#e9ecf2"></div>
<div class="b" style="left:972.0px;top:626.0px;width:70.0px;height:1.0px;background:#e9ecf2"></div>
<div class="b" style="left:972.0px;top:692.0px;width:70.0px;height:1.0px;background:#e9ecf2"></div>
<div class="b" style="left:972.0px;top:823.0px;width:70.0px;height:1.0px;background:#e9ecf2"></div>
<div class="b" style="left:972.0px;top:888.0px;width:70.0px;height:1.0px;background:#e9ecf2"></div>
<div class="b" style="left:972.0px;top:893.0px;width:70.0px;height:31.0px;background:#fff"></div>
<div class="b" style="left:1894.5px;top:299.0px;width:5.0px;height:158.0px;background:#d4d4d6;border-radius:2px"></div>
<div class="b" style="left:1767.5px;top:340.5px;width:95.5px;height:57px;background:#fff;border-radius:4px 4px 0 0;box-shadow:0 1px 6px rgba(0,0,0,.13);overflow:hidden"><span class="t" style="left:8.5px;top:13.5px;font-size:14px;color:#555">标签</span><span class="t" style="left:8.5px;top:47.5px;font-size:14px;color:#555">提醒</span></div>
<div class="b" style="left:1700.0px;top:397.5px;width:194.0px;height:8.0px;background:#fff"></div>
<div class="b" style="left:1894.0px;top:397.5px;width:18.0px;height:8.0px;background:rgba(255,255,255,.55)"></div>
<div class="b" style="left:1768.5px;top:405.5px;width:95.5px;height:52px;background:#fff;border-radius:4px 4px 0 0;box-shadow:0 1px 6px rgba(0,0,0,.13);overflow:hidden"><span class="t" style="left:8.5px;top:13.5px;font-size:14px;color:#555">标签</span><span class="t" style="left:8.5px;top:48px;font-size:14px;color:#555">提醒</span></div>
<span class="t" style="left:881.5px;top:953.1px;font-size:12.7px;color:#555;">共 619 条</span>
<div class="b" style="left:943.5px;top:947.5px;width:29px;height:26px;border:1px solid #d5dae3;border-right:none;border-top:none;border-radius:0 0 0 3px;overflow:hidden"><span class="t" style="left:6.5px;top:6.5px;font-size:12px;color:#555">50 条/页</span></div>
</div>
<div class="b" style="left:1039px;top:456px;width:1284px;height:627px;background:linear-gradient(90deg,#f1f1f1 0,#e9e9e9 19px,#e9e9e9 100%);box-shadow:0 6px 7px -3px rgba(0,0,0,.12), 4px 3px 8px -3px rgba(0,0,0,.10);overflow:hidden"><div class="b" style="left:19px;top:17px;width:1250px;height:589px;box-shadow:0 6px 12px 3px rgba(0,0,0,.085), 0 0 6px rgba(0,0,0,.05)"></div></div>
<span class="t" style="left:1843.0px;top:464.2px;font-size:12.5px;color:#cfcfcf;">放入回收站</span>
<div class="b soft2" id="app2" style="left:1058px;top:473px;width:1250px;height:590.3px;background:#cdcdcd;overflow:hidden">
<div class="b" style="left:0.0px;top:0.0px;width:1250.0px;height:36.0px;background:#cdcdcd;box-shadow:0 1px 3px rgba(0,0,0,.10)"></div>
<span class="t" style="left:11.0px;top:11.2px;font-size:14.5px;color:#c4283c;font-weight:500;letter-spacing:-.4px">孚盟</span>
<span class="t" style="left:38.5px;top:8.8px;font-size:18.5px;color:#c4283c;letter-spacing:-.7px;transform:scaleX(1.05);transform-origin:0 50%">MX</span>
<span class="t" style="left:79.0px;top:13.6px;font-size:9.8px;color:#222;">孚盟产品演示专用企业</span>
<svg class="b" style="left:994.0px;top:10.5px;" width="15" height="15" viewBox="0 0 24 24"><g fill="none" stroke="#a4a7b0" stroke-width="1.6" stroke-linecap="round"><path d="M5 12.5a7 7.5 0 0 1 14 0"/><circle cx="4.5" cy="14" r="2"/><circle cx="19.5" cy="14" r="2"/><path d="M19 16.5c-1 3-3.5 4.5-7 4.5"/></g></svg>
<svg class="b" style="left:1032.0px;top:11.5px;" width="15" height="15" viewBox="0 0 24 24"><g fill="none" stroke="#a4a7b0" stroke-width="1.6" stroke-linejoin="round"><path d="M12 2.5a9.3 9.3 0 1 1-4.6 17.4L3 21.2l1.3-4.3A9.3 9.3 0 0 1 12 2.5z"/><path d="M8.6 8c.4 3.6 3.2 6.6 7 7.4l1.1-1.6-2-1.2-1 .8c-1.3-.6-2.4-1.7-3-3l.9-1-1.1-2z" fill="#a4a7b0" stroke="none"/></g></svg>
<svg class="b" style="left:1068.0px;top:12.0px;" width="14" height="14" viewBox="0 0 24 24"><path d="M12 1v22M1 12h22" stroke="#999" stroke-width="2.2" fill="none"/></svg>
<svg class="b" style="left:1103.0px;top:11.5px;" width="15" height="15" viewBox="0 0 24 24"><g fill="none" stroke="#a4a7b0" stroke-width="1.6"><path d="M2 1.5h21M2 11.5h7M2 21.5h9"/><circle cx="16.5" cy="14.5" r="6.3"/><path d="M16.5 10.5v4.5h3"/></g></svg>
<svg class="b" style="left:1138.5px;top:12.0px;" width="15" height="15" viewBox="0 0 24 24"><g fill="none" stroke="#a4a7b0" stroke-width="1.6" stroke-linejoin="round"><path d="M3 18.5c2-1.5 2.5-4 2.5-8a6.5 6.5 0 0 1 13 0c0 4 .5 6.5 2.5 8z"/><path d="M9.5 21.5h5" stroke-linecap="round"/></g></svg>
<div class="b" style="left:1147px;top:5.5px;width:19px;height:13px;border-radius:7px;background:#c81e36;color:#e7c3c7;font-size:8px;font-weight:bold;text-align:center;line-height:13px">9</div>
<svg class="b" style="left:1175.5px;top:11.5px;" width="15" height="15" viewBox="0 0 24 24"><circle cx="12" cy="12" r="10.8" fill="none" stroke="#a4a7b0" stroke-width="1.5"/><text x="12" y="17" text-anchor="middle" font-size="14" fill="#a4a7b0" font-family="Liberation Sans, sans-serif">?</text></svg>
<div class="b" style="left:1211.5px;top:8px;width:21px;height:21px;border-radius:50%;background:#a2a2a2;overflow:hidden"><div class="b" style="left:4.5px;top:3.5px;width:12px;height:12px;border-radius:50%;background:#adadad;border:1.5px solid #989898"></div><div class="b" style="left:6px;top:15px;width:9px;height:6px;border-radius:3px;background:#bbb"></div></div>
<svg class="b" style="left:1238.0px;top:15.5px;" width="9" height="6" viewBox="0 0 9 6"><path d="M1 1l3.5 3.5L8 1" fill="none" stroke="#777" stroke-width="1.2"/></svg>
<div class="b" style="left:0.0px;top:36.0px;width:1250.0px;height:31.0px;background:#cacaca"></div>
<div class="b" style="left:0.0px;top:36.0px;width:45.0px;height:554.5px;background:#c8c8ca"></div>
<div class="b" style="left:45.0px;top:67.0px;width:1205.0px;height:523.5px;background:#cecece;border-radius:4px 0 0 0"></div>
<span class="t" style="left:565.5px;top:49.1px;font-size:10.8px;color:#666;">简报</span>
<span class="t" style="left:612.5px;top:49.1px;font-size:10.8px;color:#666;">日志</span>
<span class="t" style="left:659.0px;top:49.1px;font-size:10.8px;color:#b3132b;">待办</span>
<span class="t" style="left:707.5px;top:49.1px;font-size:10.8px;color:#666;">日程</span>
<div class="b" style="left:6px;top:46.5px;width:31px;height:29.5px;background:#b00018;border-radius:5px 1px 5px 1px;clip-path:polygon(3px 0,100% 0,100% 24px,25px 100%,0 100%,0 3px)"></div>
<svg class="b" style="left:13.5px;top:53.0px;" width="16" height="16" viewBox="0 0 24 24"><g fill="none" stroke="#e6c9cc" stroke-width="1.8" stroke-linejoin="round"><path d="M11 4.5a8.5 8.5 0 1 0 8.5 9H11z"/><path d="M14 2v8.5h7.5A8 8 0 0 0 14 2z"/></g></svg>
<svg class="b" style="left:13.3px;top:89.5px;" width="16.5" height="16.5" viewBox="0 0 24 24"><g fill="none" stroke="#8f93a0" stroke-width="1.5" stroke-linejoin="round" stroke-linecap="round"><rect x="4.5" y="3" width="16" height="18" rx="1.5"/><circle cx="12.5" cy="9.5" r="3"/><path d="M7.5 18c.5-3.5 2.5-5 5-5s4.5 1.5 5 5M2.5 7.5h3.5M2.5 16.5h3.5"/></g></svg>
<svg class="b" style="left:13.3px;top:126.2px;" width="16.5" height="16.5" viewBox="0 0 24 24"><g fill="none" stroke="#8f93a0" stroke-width="1.5" stroke-linejoin="round" stroke-linecap="round"><rect x="2.5" y="2.5" width="9" height="5.5" rx="1"/><path d="M7 8v11.5"/><rect x="12" y="10.5" width="10" height="4.5" rx="1"/><rect x="12" y="17.5" width="10" height="4.5" rx="1"/></g></svg>
<svg class="b" style="left:13.3px;top:162.8px;" width="16.5" height="16.5" viewBox="0 0 24 24"><g fill="none" stroke="#8f93a0" stroke-width="1.5" stroke-linejoin="round" stroke-linecap="round"><path d="M2 19.5V4.5h20v15"/><path d="M2.5 5l9.5 8 9.5-8M2 20.5h3M22 20.5h-3"/></g></svg>
<svg class="b" style="left:13.3px;top:199.8px;" width="16.5" height="16.5" viewBox="0 0 24 24"><g fill="none" stroke="#8f93a0" stroke-width="1.5" stroke-linejoin="round" stroke-linecap="round"><rect x="2.5" y="2.5" width="19" height="19" rx="2"/><path d="M7 7.5c.5 3 2.5 4.5 5 4.5s4.5-1.5 5-4.5"/></g></svg>
<svg class="b" style="left:13.3px;top:236.8px;" width="16.5" height="16.5" viewBox="0 0 24 24"><g fill="none" stroke="#8f93a0" stroke-width="1.5" stroke-linejoin="round" stroke-linecap="round"><circle cx="12" cy="12" r="9.5" stroke-dasharray="22 3"/><path d="M16.5 7.5l-3 6-6 3 3-6z"/></g></svg>
<svg class="b" style="left:13.3px;top:273.5px;" width="16.5" height="16.5" viewBox="0 0 24 24"><g fill="none" stroke="#8f93a0" stroke-width="1.5" stroke-linejoin="round" stroke-linecap="round"><circle cx="12" cy="6" r="3.3"/><path d="M5.5 14.5c.8-3.2 3.2-5 6.5-5s5.7 1.8 6.5 5"/><circle cx="6.5" cy="18.5" r="3.2" stroke-dasharray="7 2.5"/><circle cx="17.5" cy="18.5" r="3.2" stroke-dasharray="7 2.5"/></g></svg>
<svg class="b" style="left:13.3px;top:309.8px;" width="16.5" height="16.5" viewBox="0 0 24 24"><g fill="none" stroke="#8f93a0" stroke-width="1.5" stroke-linejoin="round" stroke-linecap="round"><rect x="4" y="6" width="16" height="15" rx="2"/><path d="M8.5 6V3.5h7V6M12 10v8M10 12.5l2-2 2 2M10 15.5l2 2 2-2" /></g></svg>
<svg class="b" style="left:13.3px;top:346.8px;" width="16.5" height="16.5" viewBox="0 0 24 24"><g fill="none" stroke="#8f93a0" stroke-width="1.5" stroke-linejoin="round" stroke-linecap="round"><rect x="7.5" y="2.5" width="14" height="14" rx="2"/><path d="M10.5 6.5h8M10.5 9.5h8M10.5 12.5h8M4.5 7v12.5a2 2 0 0 0 2 2h10"/></g></svg>
<svg class="b" style="left:13.3px;top:383.5px;" width="16.5" height="16.5" viewBox="0 0 24 24"><g fill="none" stroke="#8f93a0" stroke-width="1.5" stroke-linejoin="round" stroke-linecap="round"><path d="M3.5 3.5h17v13h-17zM8.5 3.5v7l2.5-2 2.5 2v-7M3.5 19h17M3.5 21.5h17"/></g></svg>
<svg class="b" style="left:13.3px;top:420.2px;" width="16.5" height="16.5" viewBox="0 0 24 24"><g fill="none" stroke="#8f93a0" stroke-width="1.5" stroke-linejoin="round" stroke-linecap="round"><path d="M3 2.5v19M7.5 21.5v-5M12 21.5v-8M16.5 21.5v-10.5M20.5 21.5V8M6.5 13.5l6-5.5 3 1 5.5-5.5M17.5 3.5h3.5v3.5"/></g></svg>
<svg class="b" style="left:13.6px;top:562.0px;" width="16" height="16" viewBox="0 0 24 24"><g fill="none" stroke="#70727a" stroke-width="1.5" stroke-linejoin="round"><path d="M22.5 10.4 L22.5 13.6 L20.2 14.0 L19.2 16.3 L20.5 18.3 L18.3 20.5 L16.3 19.2 L14.0 20.2 L13.6 22.5 L10.4 22.5 L10.0 20.2 L7.7 19.2 L5.7 20.5 L3.5 18.3 L4.8 16.3 L3.8 14.0 L1.5 13.6 L1.5 10.4 L3.8 10.0 L4.8 7.7 L3.5 5.7 L5.7 3.5 L7.7 4.8 L10.0 3.8 L10.4 1.5 L13.6 1.5 L14.0 3.8 L16.3 4.8 L18.3 3.5 L20.5 5.7 L19.2 7.7 L20.2 10.0z"/><circle cx="12" cy="12" r="3.6"/></g></svg>
<span class="t" style="left:65.0px;top:75.4px;font-size:9.2px;color:#b3132b;">待办的审批</span>
<span class="t" style="left:132.5px;top:75.4px;font-size:9.2px;color:#6a6a6a;">已办的审批</span>
<span class="t" style="left:199.0px;top:75.4px;font-size:9.2px;color:#6a6a6a;">我提交的审批</span>
<div class="b" style="left:55.0px;top:93.0px;width:1195.0px;height:1.0px;background:#c3c3c3"></div>
<div class="b" style="left:55.0px;top:91.5px;width:66.5px;height:2.0px;background:#b00018"></div>
<span class="t" style="left:55.0px;top:119.7px;font-size:8.6px;color:#333;">模块</span>
<div class="b" style="left:83.0px;top:113.0px;width:78.0px;height:21.0px;border:1px solid #bdbdbd;border-left:none;border-radius:0 2px 2px 0"></div>
<span class="t" style="left:89.5px;top:119.7px;font-size:8.6px;color:#444;">全部</span>
<svg class="b" style="left:145.5px;top:121.5px;" width="7" height="4" viewBox="0 0 7 4"><path d="M0 0h7L3.5 4z" fill="#aeb0b4"/></svg>
<div class="b" style="left:170.5px;top:113.0px;width:165.0px;height:21.0px;border:1px solid #bdbdbd;border-radius:2px 0 0 2px"></div>
<span class="t" style="left:177.0px;top:119.7px;font-size:8.6px;color:#b3b3b3;">请输入审批主题</span>
<div class="b" style="left:335.0px;top:113.0px;width:31.0px;height:21.0px;background:#b9bcbf;border-radius:0 2px 2px 0"></div>
<svg class="b" style="left:346.0px;top:119.0px;" width="9" height="9" viewBox="0 0 9 9"><circle cx="3.8" cy="3.8" r="2.8" fill="none" stroke="#444" stroke-width="1.1"/><path d="M6 6l2.3 2.3" stroke="#444" stroke-width="1.2"/></svg>
<svg class="b" style="left:377.0px;top:120.0px;" width="7" height="8" viewBox="0 0 7 8"><path d="M.5 .5h6L4 4v3.5" fill="none" stroke="#777" stroke-width=".8"/></svg>
<span class="t" style="left:389.5px;top:119.7px;font-size:8.6px;color:#333;">筛选</span>
<div class="b" style="left:55.0px;top:150.5px;width:1184.0px;height:25.0px;background:#c3c5c7"></div>
<span class="t" style="left:68.0px;top:158.5px;font-size:9px;color:#6d6f73;">审批主题</span>
<span class="t" style="left:458.0px;top:158.5px;font-size:9px;color:#6d6f73;">模块</span>
<span class="t" style="left:554.5px;top:158.5px;font-size:9px;color:#6d6f73;">状态</span>
<span class="t" style="left:652.5px;top:158.5px;font-size:9px;color:#6d6f73;">停留时长</span>
<span class="t" style="left:750.5px;top:158.5px;font-size:9px;color:#6d6f73;">当前审批人</span>
<span class="t" style="left:848.0px;top:158.5px;font-size:9px;color:#6d6f73;">审批提交人</span>
<span class="t" style="left:946.0px;top:158.5px;font-size:9px;color:#6d6f73;">流程开始时间</span>
<span class="t" style="left:1091.5px;top:158.5px;font-size:9px;color:#6d6f73;">流程结束时间</span>
<span class="t" style="left:68.0px;top:190.8px;font-size:7.9px;color:#262626;">销售订单-MIC 会员资料-SO21070900009-Conservation Mart LLC-韩妮</span>
<span class="t" style="left:68px;top:206.7px;font-size:7.8px;color:#777">"韩妮" <span style="color:#2a9d2a">提交</span>了审批&nbsp;&nbsp;&nbsp;&nbsp;&nbsp;2021-07-09 18:00</span>
<span class="t" style="left:458.0px;top:190.8px;font-size:7.9px;color:#262626;">销售订单</span>
<span class="t" style="left:554.5px;top:190.8px;font-size:7.9px;color:#262626;">进行中</span>
<span class="t" style="left:652.5px;top:190.8px;font-size:7.9px;color:#262626;">10分钟</span>
<span class="t" style="left:750.5px;top:190.8px;font-size:7.9px;color:#262626;">吴小正</span>
<span class="t" style="left:848.0px;top:190.8px;font-size:7.9px;color:#262626;">韩妮</span>
<span class="t" style="left:946.0px;top:190.8px;font-size:7.9px;color:#262626;">2021-07-09 18:00:24</span>
<span class="t" style="left:68.0px;top:245.3px;font-size:7.9px;color:#262626;">销售订单-NA-SO21070900006-AERO RECEIVING-邓欣</span>
<span class="t" style="left:68px;top:261.2px;font-size:7.8px;color:#777">"邓欣" <span style="color:#2a9d2a">提交</span>了审批&nbsp;&nbsp;&nbsp;&nbsp;&nbsp;2021-07-09 18:00</span>
<span class="t" style="left:458.0px;top:245.3px;font-size:7.9px;color:#262626;">销售订单</span>
<span class="t" style="left:554.5px;top:245.3px;font-size:7.9px;color:#262626;">进行中</span>
<span class="t" style="left:652.5px;top:245.3px;font-size:7.9px;color:#262626;">10分钟</span>
<span class="t" style="left:750.5px;top:245.3px;font-size:7.9px;color:#262626;">吴小正</span>
<span class="t" style="left:848.0px;top:245.3px;font-size:7.9px;color:#262626;">邓欣</span>
<span class="t" style="left:946.0px;top:245.3px;font-size:7.9px;color:#262626;">2021-07-09 18:00:53</span>
<span class="t" style="left:1092.0px;top:245.3px;font-size:7.9px;color:#262626;">-</span>
<span class="t" style="left:68.0px;top:299.8px;font-size:7.9px;color:#262626;">销售订单-NA-SO21070700007-Cliffe Packaging Limited-韩妮</span>
<span class="t" style="left:68px;top:315.7px;font-size:7.8px;color:#777">"韩妮" <span style="color:#2a9d2a">提交</span>了审批&nbsp;&nbsp;&nbsp;&nbsp;&nbsp;2021-07-09 18:07</span>
<span class="t" style="left:458.0px;top:299.8px;font-size:7.9px;color:#262626;">销售订单</span>
<span class="t" style="left:554.5px;top:299.8px;font-size:7.9px;color:#262626;">进行中</span>
<span class="t" style="left:652.5px;top:299.8px;font-size:7.9px;color:#262626;">4分钟</span>
<span class="t" style="left:750.5px;top:299.8px;font-size:7.9px;color:#262626;">吴小正</span>
<span class="t" style="left:848.0px;top:299.8px;font-size:7.9px;color:#262626;">韩妮</span>
<span class="t" style="left:946.0px;top:299.8px;font-size:7.9px;color:#262626;">2021-07-09 18:07:17</span>
<div class="b" style="left:55.0px;top:283.0px;width:1184.0px;height:1.0px;background:#c4c4c4"></div>
<span class="t" style="left:548.0px;top:564.2px;font-size:8.6px;color:#555;">共 3 条</span>
<div class="b" style="left:581.5px;top:559.0px;width:53.0px;height:18.0px;border:1px solid #b3b6ba;border-top:none;border-right:none"></div>
<span class="t" style="left:586.5px;top:564.2px;font-size:8.6px;color:#666;">20 条/页</span>
<svg class="b" style="left:621.0px;top:565.5px;" width="7" height="4" viewBox="0 0 7 4"><path d="M0 0h7L3.5 4z" fill="#b5b5b5"/></svg>
<svg class="b" style="left:648.0px;top:564.5px;" width="4" height="7" viewBox="0 0 4 7"><path d="M3.5 .5L.5 3.5l3 3" fill="none" stroke="#b0b0b0" stroke-width="1"/></svg>
<span class="t" style="left:663.5px;top:563.6px;font-size:8.8px;color:#b3132b;font-weight:bold">1</span>
<svg class="b" style="left:681.5px;top:564.5px;" width="4" height="7" viewBox="0 0 4 7"><path d="M.5 .5l3 3-3 3" fill="none" stroke="#b0b0b0" stroke-width="1"/></svg>
<span class="t" style="left:698.0px;top:564.2px;font-size:8.6px;color:#666;">前往</span>
<div class="b" style="left:719.0px;top:559.0px;width:19.0px;height:18.0px;border:1px solid #b3b6ba;border-top:none;border-right:none"></div>
<span class="t" style="left:726.5px;top:563.7px;font-size:8.6px;color:#555;">1</span>
<span class="t" style="left:744.0px;top:564.2px;font-size:8.6px;color:#555;">页</span>
<div class="b" style="left:1067.3px;top:481.0px;width:1.4px;height:104.0px;background:#b0b0b0"></div>
<svg class="b" style="left:1073.5px;top:485.5px;" width="10" height="10" viewBox="0 0 24 24"><g fill="none" stroke="#888" stroke-width="1.8" stroke-linejoin="round"><path d="M3 18.5c2-1.5 2.5-4 2.5-8a6.5 6.5 0 0 1 13 0c0 4 .5 6.5 2.5 8z"/></g></svg>
<span class="t" style="left:1087.0px;top:487.3px;font-size:8.4px;color:#444;">提醒</span>
<svg class="b" style="left:1229.5px;top:487.0px;" width="6" height="6" viewBox="0 0 6 6"><path d="M.5 .5l5 5M5.5 .5l-5 5" stroke="#aaa" stroke-width=".9"/></svg>
<div class="b" style="left:1074.0px;top:500.0px;width:169.0px;height:1.0px;background:#adadad"></div>
<span class="t" style="left:1074px;top:516.9px;width:169px;text-align:center;font-size:9.2px;color:#7a7a7a">您有一条单据审批待处理 销售订</span>
<span class="t" style="left:1074px;top:529.6px;width:169px;text-align:center;font-size:9.2px;color:#7a7a7a">单-NA-SO21070900011-CÔNG TY</span>
<span class="t" style="left:1074px;top:542.9px;width:169px;text-align:center;font-size:9.2px;color:#7a7a7a">TNHH THIẾT BỊ CHĂM SÓC S...</span>
<div class="b" style="left:1123.5px;top:559.0px;width:62.5px;height:22.0px;background:#b00018;border-radius:1px"></div>
<span class="t" style="left:1130.0px;top:565.8px;font-size:8.4px;color:#e8c5c9;">立即处理</span>
<svg class="b" style="left:1172.0px;top:567.5px;" width="8" height="5" viewBox="0 0 8 5"><path d="M0 0h8L4 5z" fill="#f0dadd"/></svg>
<div class="b" style="left:1248.0px;top:438.0px;width:2.0px;height:45.0px;background:#666"></div>
<div class="b" style="left:458.0px;top:89.5px;width:341.0px;height:190.5px;background:#fff;border-radius:1px;box-shadow:0 1px 4px rgba(0,0,0,.18)"></div>
<span class="t" style="left:468.5px;top:100.9px;font-size:12.2px;color:#333;">同意</span>
<svg class="b" style="left:780.5px;top:101.0px;" width="8" height="8" viewBox="0 0 8 8"><path d="M.5 .5l7 7M7.5 .5l-7 7" stroke="#666" stroke-width=".9"/></svg>
<span class="t" style="left:471.0px;top:140.7px;font-size:9.2px;color:#444;">审批意见</span>
<div class="b" style="left:471.0px;top:157.0px;width:315.5px;height:76.0px;border:1px solid #dedede;border-top-color:#f6f6f6;border-bottom:none;border-radius:2px"></div>
<span class="t" style="left:476.5px;top:162.4px;font-size:9.2px;color:#c9c9c9;">请输入审批意见（500字以内）</span>
<div class="b" style="left:780.0px;top:225.5px;width:1.0px;height:1.5px;background:#999"></div>
<div class="b" style="left:780.0px;top:228.5px;width:1.0px;height:1.5px;background:#999"></div>
<span class="t" style="left:704.0px;top:255.8px;font-size:9.4px;color:#666;letter-spacing:1px">取消</span>
<div class="b" style="left:735.0px;top:251.0px;width:1.0px;height:19.0px;background:#ebebeb"></div>
<div class="b" style="left:743.5px;top:249.5px;width:43.0px;height:20.5px;background:#d0021b;border-radius:1px"></div>
<span class="t" style="left:754.5px;top:255.8px;font-size:9.4px;color:#fff;letter-spacing:1.5px">确定</span>
</div>
</body></html>
